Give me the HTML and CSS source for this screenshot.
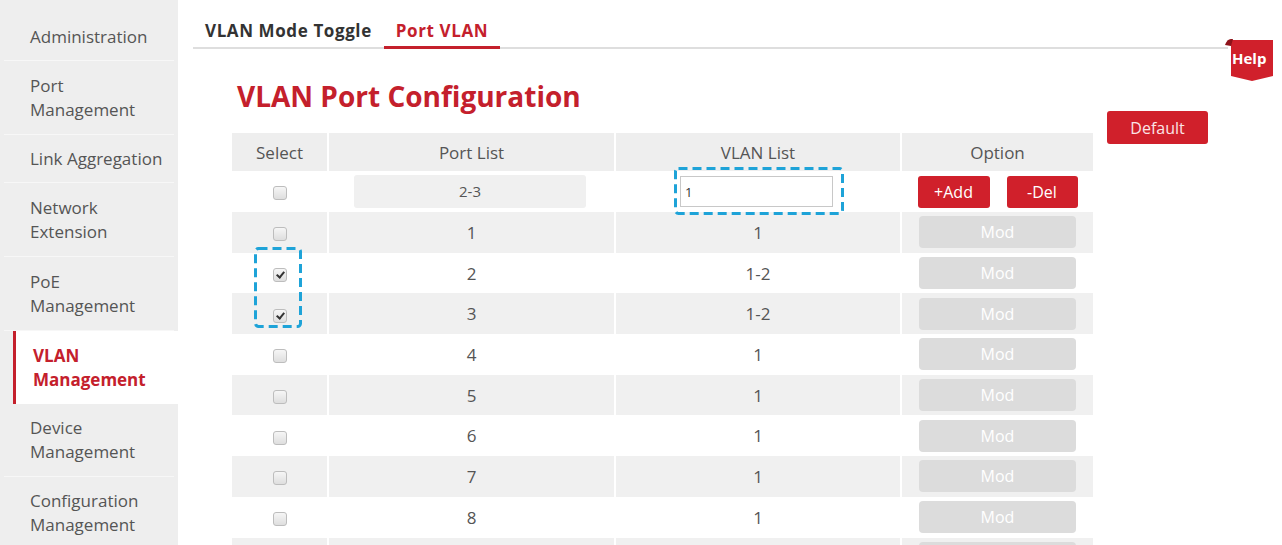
FILE: index.html
```html
<!DOCTYPE html>
<html lang="en">
<head>
    <meta charset="UTF-8">
    <meta name="viewport" content="width=device-width, initial-scale=1.0">
    <title>VLAN Management - Port VLAN</title>
    <link rel="stylesheet" href="styles.css">
</head>
<body>
    <div class="page">
        <aside class="sidebar">
            <a class="nav-item single">Administration</a>
            <a class="nav-item">Port<br>Management</a>
            <a class="nav-item single">Link Aggregation</a>
            <a class="nav-item">Network<br>Extension</a>
            <a class="nav-item">PoE<br>Management</a>
            <a class="nav-item active">VLAN<br>Management</a>
            <a class="nav-item tight">Device<br>Management</a>
            <a class="nav-item tight">Configuration<br>Management</a>
        </aside>

        <main class="main">
            <div class="tabs">
                <span class="tab">VLAN Mode Toggle</span>
                <span class="tab active">Port VLAN</span>
            </div>

            <!-- help ribbon in the top right corner -->
            <a class="help">
                <svg width="50" height="46" viewBox="0 0 50 46">
                    <path d="M6 2 H48 V38 L27 43 L6 38 Z" fill="#d0202b"/>
                    <path d="M0 7 Q2 1 6 1 L8 1 L6 8 Z" fill="#8e1219"/>
                </svg>
                <span>Help</span>
            </a>

            <div class="content">
                <div class="panel">
                    <h2 class="title">VLAN Port Configuration</h2>
                    <table class="vlan-table">
                        <colgroup>
                            <col class="col-select">
                            <col class="col-port">
                            <col class="col-vlan">
                            <col class="col-option">
                        </colgroup>
                        <thead>
                            <tr>
                                <th>Select</th>
                                <th>Port List</th>
                                <th>VLAN List</th>
                                <th>Option</th>
                            </tr>
                        </thead>
                        <tbody id="rows">
                            <tr class="edit-row">
                                <td><span class="cb"></span></td>
                                <td><div class="field readonly">2-3</div></td>
                                <td>
                                    <div class="mark-wrap">
                                        <input class="field" type="text" value="1">
                                        <svg class="mark" width="170" height="48">
                                            <rect x="1.5" y="1.5" width="167" height="45" rx="3" fill="none" stroke="#1ea3d8" stroke-width="3" stroke-dasharray="9 5"/>
                                        </svg>
                                    </div>
                                </td>
                                <td>
                                    <div class="actions">
                                        <button class="btn btn-red btn-add">+Add</button>
                                        <button class="btn btn-red btn-del">-Del</button>
                                    </div>
                                </td>
                            </tr>
                        </tbody>
                    </table>
                </div>
                <div class="side-actions">
                    <button class="btn btn-red btn-default">Default</button>
                </div>
            </div>
        </main>
    </div>

    <script>
        // Tabla de puertos
        const ports = [
            { port: 1, vlan: '1', checked: false },
            { port: 2, vlan: '1-2', checked: true },
            { port: 3, vlan: '1-2', checked: true },
            { port: 4, vlan: '1', checked: false },
            { port: 5, vlan: '1', checked: false },
            { port: 6, vlan: '1', checked: false },
            { port: 7, vlan: '1', checked: false },
            { port: 8, vlan: '1', checked: false }
        ];

        const tbody = document.getElementById('rows');
        ports.forEach((p, i) => {
            const tr = document.createElement('tr');
            tr.className = i % 2 === 0 ? 'row-grey' : 'row-white';
            const check = p.checked ? '<span class="cb checked"></span>' : '<span class="cb"></span>';
            let mark = '';
            if (p.port === 2) {
                // marca alrededor de los puertos seleccionados
                mark = '<svg class="mark mark-checks" width="48" height="81">' +
                    '<rect x="1.5" y="1.5" width="45" height="78" rx="3" fill="none" stroke="#1ea3d8" stroke-width="3" stroke-dasharray="9 5"/></svg>';
            }
            tr.innerHTML =
                '<td class="cell-select">' + check + mark + '</td>' +
                '<td>' + p.port + '</td>' +
                '<td>' + p.vlan + '</td>' +
                '<td><button class="btn btn-mod">Mod</button></td>';
            tbody.appendChild(tr);
        });

        // la fila siguiente queda cortada por el borde de la ventana
        const more = document.createElement('tr');
        more.className = 'row-grey';
        more.innerHTML = '<td></td><td></td><td></td><td><button class="btn btn-mod"></button></td>';
        tbody.appendChild(more);
    </script>
</body>
</html>
```

FILE: styles.css
```css
html, body {
    margin: 0;
    height: 100%;
    overflow: hidden;
}
body {
    font-family: "Open Sans", Arial, sans-serif;
    color: #555;
    background: #fff;
}
.page {
    display: flex;
    height: 100%;
}

/* left menu */
.sidebar {
    width: 178px;
    flex: none;
    background: #eeeeee;
    padding-top: 13px;
}
.nav-item {
    display: block;
    margin: 0 4px;
    padding: 13px 0 12px 26px;
    font-size: 17px;
    line-height: 24px;
    color: #555;
    border-bottom: 1px solid #f7f7f7;
    cursor: pointer;
}
.nav-item.single {
    padding-top: 12px;
    padding-bottom: 11px;
}
.nav-item.tight {
    padding-top: 12px;
    padding-bottom: 12px;
}
.nav-item.active {
    margin: 0 0 0 13px;
    padding: 13px 0 12px 17px;
    background: #fff;
    border-left: 3px solid #c4202c;
    border-bottom: none;
    color: #c4202c;
    font-weight: bold;
}

/* main area */
.main {
    flex: 1;
    position: relative;
}
.tabs {
    display: flex;
    margin: 0 54px 0 15px;
    padding-top: 16px;
    border-bottom: 2px solid #dedede;
}
.tab {
    padding: 0 12px;
    line-height: 30px;
    margin-bottom: -2px;
    border-bottom: 3px solid transparent;
    font-size: 17px;
    font-weight: bold;
    letter-spacing: 0.6px;
    color: #333;
}
.tab.active {
    color: #c4202c;
    border-bottom-color: #c4202c;
}

.help {
    position: absolute;
    top: 38px;
    left: 1047px;
    width: 50px;
    height: 46px;
    cursor: pointer;
}
.help svg {
    position: absolute;
    top: 0;
    left: 0;
}
.help span {
    position: absolute;
    top: 10px;
    left: 7px;
    font-size: 15px;
    font-weight: bold;
    color: #fff;
    line-height: 20px;
}

.content {
    display: flex;
    align-items: flex-start;
    gap: 14px;
    margin-left: 54px;
}
.title {
    margin: 29px 0 19px 5px;
    font-size: 28px;
    line-height: 36px;
    color: #c4202c;
}
.side-actions {
    padding-top: 62px;
}

/* table */
.vlan-table {
    width: 861px;
    table-layout: fixed;
    border-collapse: separate;
    border-spacing: 0;
    font-size: 17px;
    text-align: center;
}
.col-select { width: 95px; }
.col-port { width: 287px; }
.col-vlan { width: 286px; }
.col-option { width: 193px; }
.vlan-table th {
    height: 38px;
    padding: 0;
    font-weight: normal;
    background: #eeeeee;
    border-left: 2px solid #fff;
}
.vlan-table th:first-child,
.vlan-table td:first-child {
    border-left: none;
}
.vlan-table td {
    height: 40.7px;
    padding: 0;
    border-left: 2px solid transparent;
}
.vlan-table .edit-row td {
    height: 41px;
}
.row-grey td {
    background: #f0f0f0;
    border-left-color: #fff;
}
.cell-select {
    position: relative;
}

.cb {
    display: inline-block;
    width: 12px;
    height: 12px;
    border: 1px solid #bdbdbd;
    border-radius: 3px;
    background: linear-gradient(#f6f6f6, #dedede);
    vertical-align: middle;
    position: relative;
}
.cb.checked::after {
    content: "";
    position: absolute;
    left: 4px;
    top: 1px;
    width: 3px;
    height: 6px;
    border: solid #333;
    border-width: 0 2px 2px 0;
    transform: rotate(40deg);
}

.field {
    box-sizing: border-box;
    height: 33px;
    font: inherit;
    color: #555;
}
.field.readonly {
    width: 232px;
    margin-left: 25px;
    line-height: 33px;
    font-size: 15px;
    background: #f0f0f0;
    border-radius: 3px;
}
.mark-wrap {
    position: relative;
    width: 153px;
    margin-left: 64px;
}
input.field {
    display: block;
    width: 153px;
    height: 31px;
    padding: 0 4px;
    border: 1px solid #c8c8c8;
    outline: none;
    font-size: 13px;
    color: #333;
}
.mark {
    position: absolute;
    left: -6px;
    top: -9px;
    z-index: 1;
    pointer-events: none;
}
.mark-checks {
    left: 22px;
    top: -6px;
}

/* buttons */
.btn {
    border: none;
    border-radius: 3px;
    font-family: inherit;
    font-size: 16px;
    cursor: pointer;
}
.btn-red {
    background: #d0202b;
    color: #fff;
}
.actions {
    display: flex;
    justify-content: center;
    gap: 17px;
}
.btn-add { width: 72px; height: 32px; }
.btn-del { width: 71px; height: 32px; }
.btn-default {
    width: 101px;
    height: 33px;
    color: #fbe4e6;
}
.btn-mod {
    width: 157px;
    height: 32px;
    vertical-align: middle;
    background: #dcdcdc;
    color: #fff;
    border-radius: 4px;
}
```
